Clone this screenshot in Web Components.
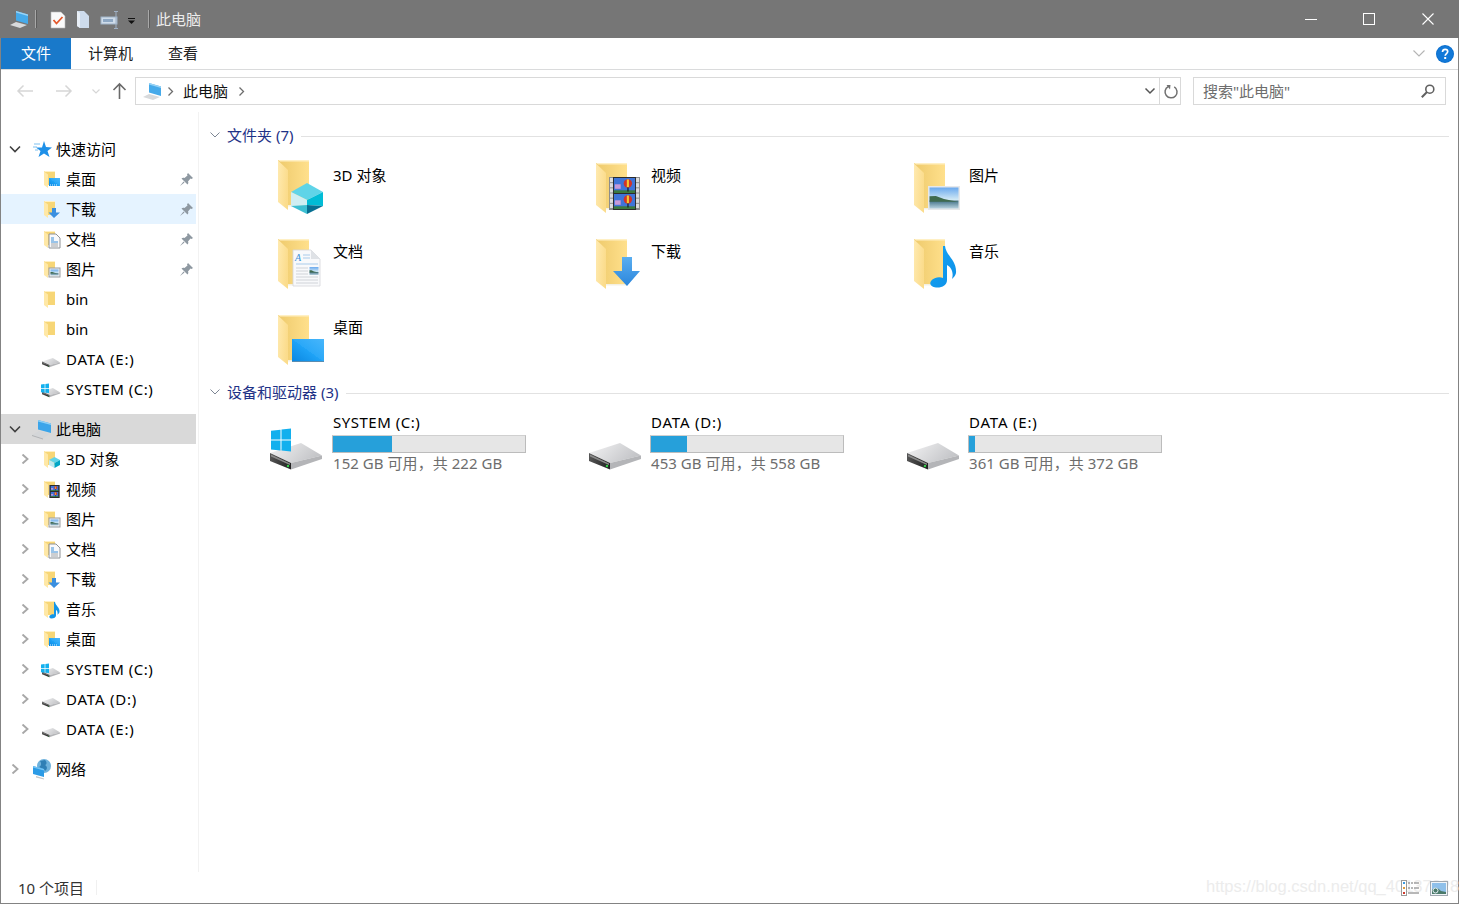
<!DOCTYPE html>
<html lang="zh-CN">
<head>
<meta charset="utf-8">
<title>此电脑</title>
<style>
  html, body { margin: 0; height: 100%; overflow: hidden; background: #fff; }
  body { font: 15px/20px "Noto Sans", "Noto Sans CJK SC", sans-serif; color: #000; }
</style>
</head>
<body>
<ex-window>
  <ex-titlebar slot="top">此电脑</ex-titlebar>
  <ex-ribbon slot="top"></ex-ribbon>
  <ex-addressbar slot="top"></ex-addressbar>

  <ex-nav-pane slot="nav">
    <ex-nav-row level="0" chevron="open" icon="star">快速访问</ex-nav-row>
    <ex-nav-row level="1" icon="s-desktop" pinned>桌面</ex-nav-row>
    <ex-nav-row level="1" icon="s-download" pinned state="hover">下载</ex-nav-row>
    <ex-nav-row level="1" icon="s-doc" pinned>文档</ex-nav-row>
    <ex-nav-row level="1" icon="s-picture" pinned>图片</ex-nav-row>
    <ex-nav-row level="1" icon="s-folder">bin</ex-nav-row>
    <ex-nav-row level="1" icon="s-folder">bin</ex-nav-row>
    <ex-nav-row level="1" icon="s-drive" caps="0.8">DATA (E:)</ex-nav-row>
    <ex-nav-row level="1" icon="s-sysdrive" caps="0.5">SYSTEM (C:)</ex-nav-row>
    <ex-nav-row level="0" chevron="open" icon="computer" state="selected" gap>此电脑</ex-nav-row>
    <ex-nav-row level="1" chevron="closed" icon="s-3d">3D 对象</ex-nav-row>
    <ex-nav-row level="1" chevron="closed" icon="s-video">视频</ex-nav-row>
    <ex-nav-row level="1" chevron="closed" icon="s-picture">图片</ex-nav-row>
    <ex-nav-row level="1" chevron="closed" icon="s-doc">文档</ex-nav-row>
    <ex-nav-row level="1" chevron="closed" icon="s-download">下载</ex-nav-row>
    <ex-nav-row level="1" chevron="closed" icon="s-music">音乐</ex-nav-row>
    <ex-nav-row level="1" chevron="closed" icon="s-desktop">桌面</ex-nav-row>
    <ex-nav-row level="1" chevron="closed" icon="s-sysdrive" caps="0.5">SYSTEM (C:)</ex-nav-row>
    <ex-nav-row level="1" chevron="closed" icon="s-drive" caps="0.8">DATA (D:)</ex-nav-row>
    <ex-nav-row level="1" chevron="closed" icon="s-drive" caps="0.8">DATA (E:)</ex-nav-row>
    <ex-nav-row level="0" chevron="closed" icon="network" gap>网络</ex-nav-row>
  </ex-nav-pane>

  <ex-content slot="main">
    <ex-section heading="文件夹 (7)" kind="folders">
      <ex-folder icon="b-3d">3D 对象</ex-folder>
      <ex-folder icon="b-video">视频</ex-folder>
      <ex-folder icon="b-picture">图片</ex-folder>
      <ex-folder icon="b-doc">文档</ex-folder>
      <ex-folder icon="b-download">下载</ex-folder>
      <ex-folder icon="b-music">音乐</ex-folder>
      <ex-folder icon="b-desktop">桌面</ex-folder>
    </ex-section>
    <ex-section heading="设备和驱动器 (3)" kind="drives">
      <ex-drive icon="b-sysdrive" caps="0.5" used="30.500" free="152 GB 可用，共 222 GB">SYSTEM (C:)</ex-drive>
      <ex-drive icon="b-drive" caps="0.8" used="19" free="453 GB 可用，共 558 GB">DATA (D:)</ex-drive>
      <ex-drive icon="b-drive" caps="0.8" used="3" free="361 GB 可用，共 372 GB">DATA (E:)</ex-drive>
    </ex-section>
  </ex-content>

  <ex-statusbar slot="bottom">10 个项目</ex-statusbar>
</ex-window>

<script>
  // Icon drawings. Gradient ids are safe to repeat, each ex-icon has its own shadow tree.
  const bigFolder = (dy = 0) => `
    <defs>
      <linearGradient id="fb" x1="0" y1="0" x2="1" y2="0"><stop offset="0" stop-color="#eeca6c"/><stop offset="1" stop-color="#ffe08c"/></linearGradient>
      <linearGradient id="ff" x1="0" y1="0" x2="1" y2="0.3"><stop offset="0" stop-color="#ffeab0"/><stop offset="1" stop-color="#fbdc8c"/></linearGradient>
    </defs>
    <g transform="translate(0 ${dy})">
      <path d="M8 7h31v45H18z" fill="url(#fb)"/>
      <path d="M8 7h31v1.5H10z" fill="#fff0c4"/>
      <path d="M18 52h21v1.500H18z" fill="#f4f0e2"/>
      <path d="M8 7.500 18 17v40L8 49z" fill="url(#ff)"/>
    </g>`;
  const smallFolder = `
    <path d="M2 2h11v14H6z" fill="#f7d676"/>
    <path d="M2 2h11v1H3z" fill="#fff0c4"/>
    <path d="M2 2.500 6 5.500V19L2 16z" fill="#ffe8a6"/>`;
  const screen = (x, y, w, h) => `
    <defs><linearGradient id="sc" x1="0" y1="1" x2="1" y2="0"><stop offset="0" stop-color="#0a86e0"/><stop offset="0.5" stop-color="#1ea3f7"/><stop offset="0.5" stop-color="#2aa8f8"/><stop offset="1" stop-color="#48b6fb"/></linearGradient></defs>
    <rect x="${x}" y="${y}" width="${w}" height="${h}" fill="url(#sc)"/>`;
  const photo = (x, y, w, h) => {
    const p = (a, b) => `${x + a * w} ${y + b * h}`;
    return `
    <defs>
      <linearGradient id="sky" x1="0" y1="0" x2="0" y2="1"><stop offset="0" stop-color="#6aa9ee"/><stop offset="1" stop-color="#d8edf5"/></linearGradient>
      <linearGradient id="wat" x1="0" y1="0" x2="0" y2="1"><stop offset="0" stop-color="#3f6f85"/><stop offset="1" stop-color="#b8d2df"/></linearGradient>
    </defs>
    <rect x="${x}" y="${y}" width="${w}" height="${h * 0.62}" fill="url(#sky)"/>
    <rect x="${x}" y="${y + h * 0.62}" width="${w}" height="${h * 0.38}" fill="url(#wat)"/>
    <path d="M${p(0, 0.42)} L${p(0.22, 0.4)} L${p(0.5, 0.55)} L${p(0.75, 0.62)} L${p(1, 0.68)} L${p(0, 0.68)}z" fill="#3f6a4e"/>`;
  };
  const drive = (x, y, s) => `
    <defs>
      <linearGradient id="dt" x1="0" y1="0" x2="1" y2="0.4"><stop offset="0" stop-color="#f4f4f5"/><stop offset="1" stop-color="#c4c5c8"/></linearGradient>
      <linearGradient id="df" x1="0" y1="0" x2="1" y2="0"><stop offset="0" stop-color="#555"/><stop offset="1" stop-color="#222"/></linearGradient>
    </defs>
    <g transform="translate(${x} ${y}) scale(${s})">
      <path d="M0 10 31 0 52 12.500 21 20z" fill="url(#dt)"/>
      <path d="M21 20 52 12.500V16L21 26.500z" fill="#b4b5b8"/>
      <path d="M0 10 21 20V26.500L0 18z" fill="url(#df)"/>
      <path d="M1 11.500 20 20.500V22L1 13.500z" fill="#8a8a8a"/>
      <circle cx="18" cy="23" r="1.200" fill="#35d04a"/>
    </g>`;
  const winLogo = (x, y, c, g) => `
    <g fill="#13b0ee">
      <path d="M${x} ${y + 0.12 * c}l${c - g / 2} ${-0.1 * c}v${c - 0.02 * c}h${-(c - g / 2)}z"/>
      <path d="M${x + c + g / 2} ${y}l${c - g / 2} ${-0.1 * c}v${c + 0.1 * c}h${-(c - g / 2)}z"/>
      <path d="M${x} ${y + c + g}h${c - g / 2}v${c}l${-(c - g / 2)} ${-0.1 * c}z"/>
      <path d="M${x + c + g / 2} ${y + c + g}h${c - g / 2}v${c + 0.1 * c}l${-(c - g / 2)} ${-0.1 * c}z"/>
    </g>`;
  const film = (x, y, w, h) => {
    const side = w * 0.16, holes = [];
    for (let i = 0; i < 6; i++) {
      const hy = y + 1 + i * (h - 2) / 6;
      holes.push(`<rect x="${x + 1}" y="${hy}" width="${side - 2}" height="${(h - 2) / 6 - 1}" fill="#dcdcdc"/>`);
      holes.push(`<rect x="${x + w - side + 1}" y="${hy}" width="${side - 2}" height="${(h - 2) / 6 - 1}" fill="#dcdcdc"/>`);
    }
    const fx = x + side, fw = w - 2 * side, fh = (h - 3) / 2;
    const frame = fy => `
      <rect x="${fx}" y="${fy}" width="${fw}" height="${fh}" fill="#3f74d8"/>
      <rect x="${fx}" y="${fy + fh * 0.82}" width="${fw}" height="${fh * 0.18}" fill="#3c7a40"/>
      <circle cx="${fx + fw * 0.66}" cy="${fy + fh * 0.36}" r="${fw * 0.2}" fill="#d23328"/>
      <rect x="${fx + fw * 0.61}" y="${fy + fh * 0.1}" width="${fw * 0.1}" height="${fh * 0.52}" fill="#f6c92e"/>
      <path d="M${fx + fw * 0.64} ${fy + fh * 0.62}h${fw * 0.05}v${fh * 0.28}h${-fw * 0.05}z" fill="#111"/>
      <path d="M${fx + fw * 0.04} ${fy + fh * 0.42}h${fw * 0.28}v${fh * 0.3}h${-fw * 0.28}z" fill="#c79ad8"/>`;
    return `<rect x="${x}" y="${y}" width="${w}" height="${h}" fill="#8c8c8c"/>
      <rect x="${x + side - 1}" y="${y}" width="${w - 2 * side + 2}" height="${h}" fill="#2c2c2c"/>
      ${holes.join('')}${frame(y + 1)}${frame(y + 2 + fh)}`;
  };
  const docSheet = (big) => big ? `
    <path d="M23 18h18l9 9v27H23z" fill="#f8f9fb" stroke="#d4d6da" stroke-width="0.8"/>
    <path d="M41 18v9h9z" fill="#dfe2e6"/>
    <text x="25" y="29" font-family="Liberation Serif, serif" font-style="italic" font-size="10" fill="#3a8fd8">A</text>
    <path d="M33 23h7M33 26h7M26 32h22" stroke="#a9cbea" stroke-width="1" fill="none"/>
    <path d="M26 36h12M26 39h12M26 42h12M26 45h22M26 48h22M26 51h22" stroke="#d0d3d8" stroke-width="1" fill="none"/>
    ${photo(39.500, 35, 9, 8)}` : `
    <path d="M7 7h7l4 4v10H7z" transform="translate(0 -2)" fill="#f8f9fb" stroke="#8e9296" stroke-width="1"/>
    <path d="M9 9h3M9 11h3M9 13h7" stroke="#3a8fd8" stroke-width="1" fill="none"/>
    <path d="M9 15h7M9 17h7" stroke="#a0a4a8" stroke-width="1" fill="none"/>`;
  const arrow = (big) => big ? `
    <defs><linearGradient id="ar" x1="0" y1="0" x2="0" y2="1"><stop offset="0" stop-color="#5aaef0"/><stop offset="1" stop-color="#2b86dc"/></linearGradient></defs>
    <path d="M34 25h10v14h8L39 54 25 39h9z" fill="url(#ar)"/>` : `
    <path d="M10 9h4v4.500h4L12 19 6.500 13.500H10z" fill="#3a8fe0"/>`;
  const cube = (big) => big ? `
    <path d="M21 36 37 27 53 36 37 44z" fill="#5fd4e8"/>
    <path d="M21 36 37 44V49L21 50z" fill="#cfeef2"/>
    <path d="M53 36 37 44V49L53 50z" fill="#00bcd6"/>
    <path d="M21 50 37 49 37 58z" fill="#3dbfd2"/>
    <path d="M53 50 37 49 37 58z" fill="#066f92"/>` : `
    <path d="M7 11 12.500 8 18 11 12.500 14z" fill="#5fd4e8"/>
    <path d="M7 11 12.500 14V19L7 16z" fill="#bfe9f0"/>
    <path d="M18 11 12.500 14V19L18 16z" fill="#00a6c6"/>`;
  const note = (big) => big ? `
    <defs><linearGradient id="nt" x1="0" y1="0" x2="1" y2="1"><stop offset="0" stop-color="#15a5f2"/><stop offset="1" stop-color="#0d8fe8"/></linearGradient></defs>
    <path d="M39 14 C40 24 51 28 50 41 C49.500 44 47 46 46 47 C48 40 45 35 41 33 V48 C41 53 36 56 30 55.500 C25 55 23 52 25 49 C28 45 34 44.500 37 46 V14z" fill="url(#nt)"/>` : `
    <path d="M13 3C13.500 7 18 8 17.500 13 17 14.500 16 15 15.500 16 16 13 15 11.500 14 11V16.500C14 18.500 12 19.500 9.500 19.500 7.500 19.500 7 18 7.500 17 8.500 15.500 11 15 12 15.500V3z" fill="#1296e8"/>`;

  const ICONS = {
    'b-3d': [63, 64, bigFolder(-3) + cube(true)],
    'b-video': [63, 64, bigFolder() + film(21, 21, 31, 33)],
    'b-picture': [63, 64, bigFolder() + `<rect x="22" y="30" width="32" height="24" fill="#e6e8ea"/>` + photo(23.500, 31.500, 29, 21)],
    'b-doc': [63, 64, bigFolder() + docSheet(true)],
    'b-download': [63, 64, bigFolder() + arrow(true)],
    'b-music': [63, 64, bigFolder() + note(true)],
    'b-desktop': [63, 64, bigFolder() + screen(22, 31, 32, 23) + `<rect x="22" y="53" width="32" height="1" fill="#5a8cb0"/>`],
    'b-sysdrive': [63, 64, drive(0, 30, 1) + winLogo(1, 16.500, 10, 1)],
    'b-drive': [63, 64, drive(1, 30, 1)],
    's-folder': [20, 20, smallFolder],
    's-desktop': [20, 20, smallFolder + screen(7, 9, 11, 8) + `<path d="M8 16h1M10 16h1M12 16h1M14 16h1" stroke="#e8f4ff"/>`],
    's-download': [20, 20, smallFolder + arrow(false)],
    's-doc': [20, 20, smallFolder + docSheet(false)],
    's-picture': [20, 20, smallFolder + `<rect x="7" y="9" width="11" height="9" fill="#eceef0" stroke="#9a9ea2"/>` + photo(8.500, 10.500, 8, 6)],
    's-3d': [20, 20, smallFolder + cube(false)],
    's-video': [20, 20, smallFolder + film(7, 6, 11, 13)],
    's-music': [20, 20, smallFolder + note(false)],
    's-drive': [20, 20, drive(0, 9, 0.35)],
    's-sysdrive': [20, 20, drive(0, 9, 0.35) + winLogo(-1, 5, 4, 0.7)],
    star: [20, 20, `
      <path d="M12 2 14 8 20 8.500 15.500 12 17.500 18 12 14.500 6.500 18 8.500 12 4 8.500 10 8.500z" fill="#1e90e8"/>
      <path d="M2 5h6M1 8h4M3 11h3" stroke="#7cc0f0" stroke-width="1"/>`],
    computer: [20, 20, `
      <path d="M6 1 19 4.500V14L6 10.500z" fill="#3ba5ea"/>
      <path d="M6 1 19 4.500V6L6 2.500z" fill="#8fd0f5"/>
      <path d="M0 16 7 12 18 15 11 19.500z" fill="#d4d6d8"/>
      <path d="M0 16 11 19.500V20.500L0 17z" fill="#b0b2b5"/>`],
    network: [20, 20, `
      <circle cx="12" cy="7" r="7" fill="#6fb2dc"/>
      <path d="M8 2C10 5 9 7 7 8 10 10 12 9 13 12 16 10 15 7 13 6 15 5 15 3 13 1z" fill="#2f7fb5"/>
      <path d="M1 7 12 10V18L1 15z" fill="#2b9be6"/>
      <path d="M1 7 12 10V11.500L1 8.500z" fill="#74c4f4"/>
      <path d="M4 17 12 19.500V20.500L4 18.500z" fill="#c4c6c8"/>`],
    pin: [13, 13, `
      <path d="M8 0 13 5 11.500 6 10.500 5.500 8 8.500C8.500 9.500 8.500 10.500 7.500 11.500L1.500 5.500C2.500 4.500 3.500 4.500 4.500 5L7.500 2.500 7 1.500z" fill="#8e98a1"/>
      <path d="M3.500 8.500 0 13 4.500 9.500z" fill="#8e98a1"/>`],
    'q-computer': [18, 17, `
      <path d="M6 0 18 3.500V13L6 9.500z" fill="#46aaea"/>
      <path d="M6 0 18 3.500V5L6 1.500z" fill="#9bd4f5"/>
      <path d="M0 14 6 11 17 14 10 17z" fill="#d8dadc"/>`],
    'q-note': [14, 17, `
      <path d="M0 1h10l4 4v12H0z" fill="#fafafa" stroke="#b8b8b8" stroke-width="0.6"/>
      <path d="M2.500 9 5.500 12.500 11.500 6" stroke="#e4572a" stroke-width="1.800" fill="none"/>`],
    'q-doc': [12, 17, `
      <path d="M0 0h7l5 5v12L3 17 0 15z" fill="#cddbec"/>
      <path d="M0 0 3 2V17L0 15z" fill="#e8eff7"/>`],
    'q-rename': [18, 18, `
      <rect x="0" y="6" width="16" height="7" fill="#cfdcea" stroke="#9fb3c8"/>
      <rect x="2" y="8" width="10" height="3" fill="#8ea8c4"/>
      <path d="M13 0.500h4M13 17.500h4M15 0.500v17" stroke="#9fb0c4" stroke-width="1" fill="none"/>`],
    'q-drop': [7, 6, `<path d="M0 0h7v1H0z" fill="#111"/><path d="M0 2.500h7L3.500 6z" fill="#111"/>`],
    back: [16, 12, `<path d="M16 6H1M6.500 .5 1 6l5.500 5.500" stroke="#d6d6d6" stroke-width="1.500" fill="none"/>`],
    forward: [16, 12, `<path d="M0 6h15M9.500 .5 15 6l-5.500 5.500" stroke="#d6d6d6" stroke-width="1.500" fill="none"/>`],
    'drop-light': [8, 5, `<path d="M.5 .5 4 4 7.500 .5" stroke="#d6d6d6" stroke-width="1.200" fill="none"/>`],
    up: [13, 16, `<path d="M6.500 16V1M.5 7 6.500 1l6 6" stroke="#6a6a6a" stroke-width="1.600" fill="none"/>`],
    'addr-next': [5, 9, `<path d="M.5 .5 4.500 4.500.5 8.500" stroke="#6d6d6d" stroke-width="1.300" fill="none"/>`],
    'addr-drop': [10, 6, `<path d="M.5 .5 5 5 9.500 .5" stroke="#555" stroke-width="1.500" fill="none"/>`],
    refresh: [14, 15, `<path d="M3.500 3A6 6 0 1 0 9.500 2.400" stroke="#707070" stroke-width="1.500" fill="none" transform="rotate(8 7 8)"/><path d="M2 .5 6 .5 5.500 5z" fill="#707070" transform="translate(.5 .5)"/>`],
    search: [14, 14, `<circle cx="8.800" cy="5.200" r="4" stroke="#606060" stroke-width="1.600" fill="none"/><path d="M6 8 .8 13.200" stroke="#606060" stroke-width="2" fill="none"/>`],
    'ribbon-drop': [12, 7, `<path d="M.5 .5 6 6 11.500 .5" stroke="#b4b4b4" stroke-width="1.100" fill="none"/>`],
    help: [18, 18, `<circle cx="9" cy="9" r="9" fill="#0b6fce"/><circle cx="9" cy="9" r="8" fill="#1279d8"/>
      <path d="M6.500 7C6.500 5.200 7.600 4.300 9.100 4.300 10.700 4.300 11.700 5.300 11.700 6.600 11.700 8.600 9.200 8.600 9.200 10.800" stroke="#fff" stroke-width="1.700" fill="none"/>
      <rect x="8.200" y="12" width="2" height="2" fill="#fff"/>`],
    'min': [12, 12, `<path d="M0 6.500h12" stroke="#fff" stroke-width="1"/>`],
    'max': [12, 12, `<rect x=".5" y=".5" width="11" height="11" stroke="#fff" stroke-width="1" fill="none"/>`],
    'close': [12, 12, `<path d="M.5 .5 11.500 11.500M11.500 .5 .5 11.500" stroke="#fff" stroke-width="1.100"/>`],
    'view-details': [19, 16, `
      <rect x=".5" y=".5" width="5" height="15" fill="#fff" stroke="#9a9a9a"/>
      <rect x="2" y="2" width="2" height="2" fill="#3c9ae0"/><rect x="2" y="7" width="2" height="2" fill="#e09a3c"/><rect x="2" y="12" width="2" height="2" fill="#d0392c"/>
      <path d="M7 3h2M10 3h2M13 3h5M7 8h2M10 8h2M13 8h5M7 13h11" stroke="#707070" stroke-width="1"/>`],
    'view-large': [18, 15, `
      <rect x=".5" y=".5" width="17" height="14" fill="#f0f4f8" stroke="#a0a8b0"/>
      <rect x="2" y="2" width="14" height="11" fill="#8fc0ea"/>
      <path d="M2 9C5 5 8 7 11 10L16 11V13H2z" fill="#4b7a6a"/><circle cx="5.500" cy="9.500" r="2.500" fill="none" stroke="#e8f2f8" stroke-width="1"/>`]
  };

  class ExIcon extends HTMLElement {
    connectedCallback() {
      const [w, h, body] = ICONS[this.getAttribute('name')];
      this.attachShadow({ mode: 'open' }).innerHTML = `
        <style>
          :host { display: block; flex: none; width: ${w}px; height: ${h}px; }
          svg { display: block; overflow: visible; }
        </style>
        <svg width="${w}" height="${h}" viewBox="0 0 ${w} ${h}">${body}</svg>`;
    }
  }
  customElements.define('ex-icon', ExIcon);

  class ExWindow extends HTMLElement {
    constructor() {
      super();
      this.attachShadow({ mode: 'open' }).innerHTML = `
        <style>
          :host { display: flex; flex-direction: column; box-sizing: border-box; height: 904px; border: 1px solid #838383; border-top: 0; background: #fff; position: relative; }
          .body { flex: 1; display: flex; min-height: 0; }
        </style>
        <slot name="top"></slot>
        <div class="body"><slot name="nav"></slot><slot name="main"></slot></div>
        <slot name="bottom"></slot>`;
    }
  }
  customElements.define('ex-window', ExWindow);

  class ExTitlebar extends HTMLElement {
    constructor() {
      super();
      this.attachShadow({ mode: 'open' }).innerHTML = `
        <style>
          :host { display: flex; align-items: center; height: 38px; margin: 0 -1px; padding-right: 1px; background: #767676; color: #ececec; }
          .sep { width: 1px; height: 18px; background: #a8a8a8; box-shadow: 1px 0 0 #5c5c5c; flex: none; }
          .t { margin-left: 7px; flex: 1; }
          .btns { display: flex; }
          .b { width: 58px; height: 38px; display: flex; align-items: center; justify-content: center; }
        </style>
        <ex-icon name="q-computer" style="margin-left:10px"></ex-icon>
        <span class="sep" style="margin-left:7px"></span>
        <ex-icon name="q-note" style="margin-left:15px"></ex-icon>
        <ex-icon name="q-doc" style="margin-left:12px"></ex-icon>
        <ex-icon name="q-rename" style="margin-left:12px;margin-top:2px"></ex-icon>
        <ex-icon name="q-drop" style="margin-left:9px;margin-top:3px"></ex-icon>
        <span class="sep" style="margin-left:13px"></span>
        <span class="t"><slot></slot></span>
        <div class="btns">
          <div class="b"><ex-icon name="min"></ex-icon></div>
          <div class="b"><ex-icon name="max"></ex-icon></div>
          <div class="b" style="width:60px"><ex-icon name="close"></ex-icon></div>
        </div>`;
    }
  }
  customElements.define('ex-titlebar', ExTitlebar);

  class ExRibbon extends HTMLElement {
    constructor() {
      super();
      this.attachShadow({ mode: 'open' }).innerHTML = `
        <style>
          :host { display: flex; align-items: stretch; height: 31px; border-bottom: 1px solid #dadbdc; color: #222; }
          .tab { display: flex; align-items: center; padding: 0 17px 2px; }
          .file { width: 70px; box-sizing: border-box; justify-content: center; padding: 0 0 2px; background: #1979ca; color: #fff; }
          .right { margin-left: auto; display: flex; align-items: center; gap: 11px; padding-right: 4px; }
        </style>
        <div class="tab file">文件</div>
        <div class="tab">计算机</div>
        <div class="tab" style="margin-left:1px">查看</div>
        <div class="right"><ex-icon name="ribbon-drop"></ex-icon><ex-icon name="help"></ex-icon></div>`;
    }
  }
  customElements.define('ex-ribbon', ExRibbon);

  class ExAddressbar extends HTMLElement {
    constructor() {
      super();
      this.attachShadow({ mode: 'open' }).innerHTML = `
        <style>
          :host { display: flex; align-items: flex-start; height: 42px; box-sizing: border-box; padding: 7px 12px 0 0; }
          .nav { display: flex; align-items: center; height: 28px; }
          .box { display: flex; align-items: center; height: 28px; box-sizing: border-box; border: 1px solid #d9d9d9; }
          .path { flex: 1; margin-left: 9px; padding-left: 7px; color: #111; }
          .search { width: 253px; margin-left: 12px; padding: 0 10px 0 9px; color: #6d6d6d; justify-content: space-between; }
          .div { width: 1px; height: 26px; background: #d9d9d9; margin-left: 4px; }
        </style>
        <div class="nav">
          <ex-icon name="back" style="margin-left:16px"></ex-icon>
          <ex-icon name="forward" style="margin-left:23px"></ex-icon>
          <ex-icon name="drop-light" style="margin-left:20px"></ex-icon>
          <ex-icon name="up" style="margin-left:13px"></ex-icon>
        </div>
        <div class="box path">
          <ex-icon name="q-computer"></ex-icon>
          <ex-icon name="addr-next" style="margin-left:7px"></ex-icon>
          <span style="margin-left:10px">此电脑</span>
          <ex-icon name="addr-next" style="margin-left:11px"></ex-icon>
          <span style="flex:1"></span>
          <ex-icon name="addr-drop"></ex-icon>
          <span class="div"></span>
          <ex-icon name="refresh" style="margin:0 2px 0 4px"></ex-icon>
        </div>
        <div class="box search"><span>搜索"此电脑"</span><ex-icon name="search"></ex-icon></div>`;
    }
  }
  customElements.define('ex-addressbar', ExAddressbar);

  class ExNavPane extends HTMLElement {
    constructor() {
      super();
      this.attachShadow({ mode: 'open' }).innerHTML = `
        <style>
          :host { display: block; flex: none; width: 198px; height: 100%; box-sizing: border-box; padding: 22px 2px 0 0; border-right: 1px solid #f2f2f2; }
        </style>
        <slot></slot>`;
    }
  }
  customElements.define('ex-nav-pane', ExNavPane);

  class ExNavRow extends HTMLElement {
    connectedCallback() {
      const level = +this.getAttribute('level');
      const chev = this.getAttribute('chevron');
      const state = this.getAttribute('state');
      const bg = state === 'selected' ? '#d9d9d9' : state === 'hover' ? '#e5f3ff' : 'transparent';
      const chevron = chev === 'open'
        ? `<path d="M1 2.500 6 7.500 11 2.500" stroke="#404040" stroke-width="1.600" fill="none"/>`
        : chev === 'closed' ? `<path d="M3.500 .5 8.500 5 3.500 9.500" stroke="#a8a8a8" stroke-width="1.900" fill="none"/>` : '';
      this.attachShadow({ mode: 'open' }).innerHTML = `
        <style>
          :host { display: flex; align-items: center; height: 30px; box-sizing: border-box; padding-left: ${level ? 18 : 8}px; background: ${bg}; color: #000; margin-top: ${this.hasAttribute('gap') ? 10 : 0}px; }
          svg { flex: none; margin-right: 11px; }
          .label { margin-left: 4px; white-space: nowrap; letter-spacing: ${this.getAttribute('caps') || 0}px; }
          .pin { margin-left: auto; margin-right: 3px; }
        </style>
        <svg width="12" height="10" viewBox="0 0 12 10">${chevron}</svg>
        <ex-icon name="${this.getAttribute('icon')}"></ex-icon>
        <span class="label"><slot></slot></span>
        ${this.hasAttribute('pinned') ? '<ex-icon class="pin" name="pin"></ex-icon>' : ''}`;
    }
  }
  customElements.define('ex-nav-row', ExNavRow);

  class ExContent extends HTMLElement {
    constructor() {
      super();
      this.attachShadow({ mode: 'open' }).innerHTML = `
        <style>
          :host { display: block; flex: 1; min-width: 0; padding: 13px 9px 0 0; }
        </style>
        <slot></slot>`;
    }
  }
  customElements.define('ex-content', ExContent);

  class ExSection extends HTMLElement {
    connectedCallback() {
      this.attachShadow({ mode: 'open' }).innerHTML = `
        <style>
          :host { display: block; margin-bottom: 2px; }
          .head { display: flex; align-items: center; height: 20px; padding-left: 11px; color: #1e3287; }
          .line { flex: 1; height: 1px; margin-left: 8px; background: #e2e2e2; margin-top: 2px; }
          .txt { margin-left: 7px; white-space: nowrap; }
          .grid { display: grid; grid-template-columns: repeat(3, 318px); grid-auto-rows: 72px; row-gap: 4px; padding-left: 71px; margin-top: 11px; }
        </style>
        <div class="head">
          <svg width="10" height="6" viewBox="0 0 10 6"><path d="M.5 .5 5 5 9.500 .5" stroke="#7d8694" stroke-width="1" fill="none"/></svg>
          <span class="txt">${this.getAttribute('heading')}</span>
          <span class="line"></span>
        </div>
        <div class="grid"><slot></slot></div>`;
    }
  }
  customElements.define('ex-section', ExSection);

  class ExFolder extends HTMLElement {
    connectedCallback() {
      this.attachShadow({ mode: 'open' }).innerHTML = `
        <style>
          :host { display: flex; }
          .label { padding-top: 9px; }
        </style>
        <ex-icon name="${this.getAttribute('icon')}"></ex-icon>
        <span class="label"><slot></slot></span>`;
    }
  }
  customElements.define('ex-folder', ExFolder);

  class ExDrive extends HTMLElement {
    connectedCallback() {
      this.attachShadow({ mode: 'open' }).innerHTML = `
        <style>
          :host { display: flex; }
          .col { width: 194px; margin-left: -1px; }
          .name { padding-left: 1px; margin-top: -1px; letter-spacing: ${this.getAttribute('caps')}px; }
          .bar { height: 18px; margin-top: 3px; box-sizing: border-box; border: 1px solid #bcbcbc; border-top-color: #d0d0d0; background: #e6e6e6; }
          .fill { height: 100%; width: ${this.getAttribute('used')}%; background: #26a0da; }
          .free { padding-left: 1px; color: #6d6d6d; white-space: nowrap; letter-spacing: .05px; }
        </style>
        <ex-icon name="${this.getAttribute('icon')}"></ex-icon>
        <div class="col">
          <div class="name"><slot></slot></div>
          <div class="bar"><div class="fill"></div></div>
          <div class="free">${this.getAttribute('free')}</div>
        </div>`;
    }
  }
  customElements.define('ex-drive', ExDrive);

  class ExStatusbar extends HTMLElement {
    constructor() {
      super();
      this.attachShadow({ mode: 'open' }).innerHTML = `
        <style>
          :host { display: flex; align-items: center; height: 31px; flex: none; padding-left: 17px; position: relative; color: #333; }
          .sep { width: 1px; height: 15px; background: #f0f0f0; margin-left: 12px; }
          .mark { position: absolute; left: 1205px; top: 2px; font: 16.500px/24px "Liberation Sans", sans-serif; color: #ececec; white-space: nowrap; }
          .views { margin-left: auto; margin-right: 10px; display: flex; gap: 10px; align-items: center; position: relative; margin-top: 1px; }
        </style>
        <slot></slot>
        <span class="sep"></span>
        <span class="mark">https://blog.csdn.net/qq_40137828</span>
        <div class="views"><ex-icon name="view-details"></ex-icon><ex-icon name="view-large"></ex-icon></div>`;
    }
  }
  customElements.define('ex-statusbar', ExStatusbar);
</script>
</body>
</html>
